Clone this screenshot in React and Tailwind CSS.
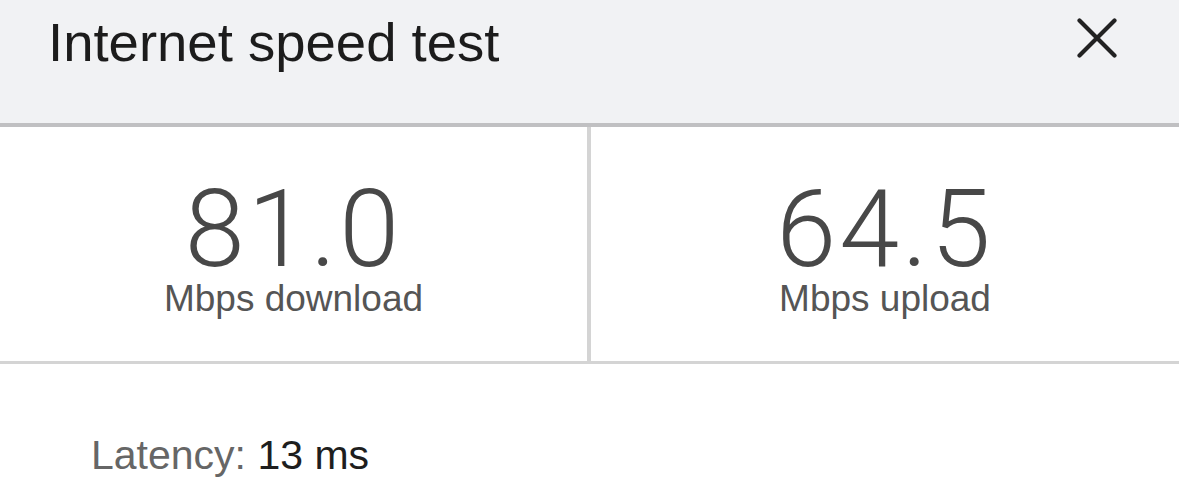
export default function App() {
  const sans = { fontFamily: '"Liberation Sans", Arial, sans-serif' };
  return (
    <div className="w-[1179px] h-[486px] bg-white overflow-hidden" style={sans}>
      <div className="h-[127px] bg-[#f1f2f4] border-b-4 border-[#c0c0c2] flex items-start justify-between pl-[48px] pr-[62px]">
        <div className="pt-[16px] text-[54.5px] leading-none text-[#1c1c1c]">
          Internet speed test
        </div>
        <svg width="40" height="40" viewBox="0 0 40 40" className="mt-[18px]">
          <path d="M2.5 2.5 L37.5 37.5 M37.5 2.5 L2.5 37.5" stroke="#222" strokeWidth="4.2" strokeLinecap="round" fill="none" />
        </svg>
      </div>
      <div className="flex h-[237px] border-b-[3px] border-[#d4d4d4]">
        <Stat value="81.0" label="Mbps download" className="w-[591px] border-r-4 border-[#d4d4d4]" />
        <Stat value="64.5" label="Mbps upload" className="flex-1" />
      </div>
      <div className="pt-[71px] pl-[91px] text-[41px] leading-none">
        <span className="text-[#666]">Latency: </span>
        <span className="text-[#1e1e1e]">13 ms</span>
      </div>
    </div>
  );
}

function Stat({ value, label, className }) {
  return (
    <div className={"flex flex-col items-center pt-[51px] " + className}>
      <div
        className="text-[108px] leading-[102px] text-[#484848] font-light tracking-[3px]"
        style={{ fontFamily: 'Roboto, "Liberation Sans", sans-serif' }}
      >
        {value}
      </div>
      <div className="text-[37px] leading-none text-[#555]">{label}</div>
    </div>
  );
}
